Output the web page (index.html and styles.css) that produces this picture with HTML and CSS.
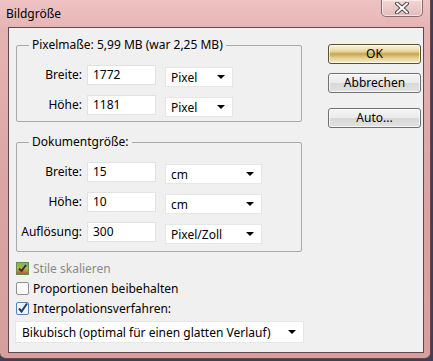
FILE: index.html
```html
<!DOCTYPE html>
<html lang="de">
<head>
    <meta charset="UTF-8">
    <title>Bildgröße</title>
    <link rel="stylesheet" href="styles.css">
</head>
<body>
    <div class="window">
        <div class="titlebar">
            <span class="title">Bildgröße</span>
            <div class="close-btn">
                <svg width="20" height="12" viewBox="0 0 20 12">
                    <path d="M5 1.5 L15 10.5 M15 1.5 L5 10.5" stroke="#4a4a4a" stroke-width="4" stroke-linecap="round"/>
                    <path d="M5 1.5 L15 10.5 M15 1.5 L5 10.5" stroke="#ffffff" stroke-width="2" stroke-linecap="round"/>
                </svg>
            </div>
        </div>
        <div class="client">
            <div class="main-col">
                <fieldset class="group group-pixel">
                    <legend>Pixelmaße: 5,99 MB (war 2,25 MB)</legend>
                    <div class="field-row">
                        <label>Breite:</label>
                        <div class="input">1772</div>
                        <div class="select small">Pixel<span class="arrow"></span></div>
                    </div>
                    <div class="field-row">
                        <label>Höhe:</label>
                        <div class="input">1181</div>
                        <div class="select small">Pixel<span class="arrow"></span></div>
                    </div>
                </fieldset>

                <fieldset class="group group-doc">
                    <legend>Dokumentgröße:</legend>
                    <div class="field-row">
                        <label>Breite:</label>
                        <div class="input">15</div>
                        <div class="select">cm<span class="arrow"></span></div>
                    </div>
                    <div class="field-row">
                        <label>Höhe:</label>
                        <div class="input">10</div>
                        <div class="select">cm<span class="arrow"></span></div>
                    </div>
                    <div class="field-row">
                        <label>Auflösung:</label>
                        <div class="input">300</div>
                        <div class="select">Pixel/Zoll<span class="arrow"></span></div>
                    </div>
                </fieldset>

                <div class="checks">
                    <div class="check-row disabled">
                        <svg class="box" width="13" height="13" viewBox="0 0 13 13">
                            <defs>
                                <linearGradient id="dis" x1="0" y1="0" x2="0" y2="1">
                                    <stop offset="0" stop-color="#6fb85a"/>
                                    <stop offset="0.5" stop-color="#b8b848"/>
                                    <stop offset="1" stop-color="#d0403a"/>
                                </linearGradient>
                            </defs>
                            <rect x="0.5" y="0.5" width="12" height="12" fill="url(#dis)" stroke="#6a8a50"/>
                            <path d="M3 6.5 L5.5 9 L10 3" fill="none" stroke="#3a2a3a" stroke-width="2"/>
                        </svg>
                        <span>Stile skalieren</span>
                    </div>
                    <div class="check-row">
                        <svg class="box" width="13" height="13" viewBox="0 0 13 13">
                            <rect x="0.5" y="0.5" width="12" height="12" rx="1.5" fill="#fafafa" stroke="#8e8f8f"/>
                        </svg>
                        <span>Proportionen beibehalten</span>
                    </div>
                    <div class="check-row">
                        <svg class="box" width="13" height="13" viewBox="0 0 13 13">
                            <rect x="0.5" y="0.5" width="12" height="12" rx="1.5" fill="#eef4fb" stroke="#5b7fb0"/>
                            <path d="M3 6.5 L5.5 9.5 L11 1.5" fill="none" stroke="#2a3d6a" stroke-width="2"/>
                        </svg>
                        <span>Interpolationsverfahren:</span>
                    </div>
                </div>

                <div class="select wide">Bikubisch (optimal für einen glatten Verlauf)<span class="arrow"></span></div>
            </div>

            <div class="button-col">
                <button class="btn btn-default">OK</button>
                <button class="btn">Abbrechen</button>
                <button class="btn btn-auto">Auto...</button>
            </div>
        </div>
    </div>
</body>
</html>
```

FILE: styles.css
```css
* {
    box-sizing: border-box;
    font-family: 'Noto Sans', 'Open Sans', sans-serif;
}

body {
    margin: 0;
    width: 433px;
    height: 361px;
    overflow: hidden;
    background: #3b3f5c;
}

.window {
    width: 431px;
    height: 359px;
    padding: 0 6px 6px 8px;
    background: linear-gradient(to bottom, #eec3c3 0px, #e6b3b3 30px, #dba3a3 200px, #d79e9e 361px);
    border: 1px solid #6b4848;
    border-top: none;
    border-left: none;
    border-radius: 0 0 6px 6px;
}

.titlebar {
    height: 27px;
    display: flex;
    justify-content: space-between;
    align-items: flex-start;
}

.title {
    font-size: 12px;
    line-height: 16px;
    margin: 6px 0 0 -2px;
    color: #000;
}

.close-btn {
    width: 42px;
    height: 17px;
    margin-right: 1px;
    border: 1px solid #8a6a6a;
    border-top: none;
    border-radius: 0 0 5px 5px;
    background: linear-gradient(to bottom, #f2d6d6, #e4bcbc);
    box-shadow: inset 0 0 0 1px rgba(255,255,255,0.55);
    display: flex;
    align-items: center;
    justify-content: center;
}

.client {
    height: 326px;
    background: #f0f0f0;
    border: 1px solid #5e4a4a;
    display: flex;
    padding: 0 0 0 7px;
}

.main-col {
    width: 297px;
    display: flex;
    flex-direction: column;
}

.group {
    margin: 9px 0 0 0;
    width: 286px;
    border: 1px solid #a9a9a9;
    border-radius: 2px;
    padding: 12px 0 6px 0;
    display: flex;
    flex-direction: column;
    gap: 10px;
}

.group legend {
    font-size: 12px;
    line-height: 16px;
    margin-left: 12px;
    padding: 0 3px;
    color: #000;
}

.group-doc {
    margin-top: 12px;
    padding-bottom: 9px;
}

.field-row {
    display: flex;
    align-items: flex-start;
    height: 20px;
}

.field-row label {
    width: 65px;
    text-align: right;
    font-size: 12px;
    line-height: 20px;
    color: #000;
}

.input {
    margin-left: 5px;
    width: 69px;
    height: 20px;
    background: #fff;
    border: 1px solid #e2e2e2;
    font-size: 12px;
    line-height: 18px;
    padding-left: 5px;
    color: #000;
}

.select {
    margin: 2px 0 0 9px;
    width: 97px;
    height: 20px;
    background: #fff;
    border: 1px solid #e6e6e6;
    font-size: 12px;
    line-height: 19px;
    padding-left: 5px;
    color: #000;
    display: flex;
    justify-content: space-between;
    align-items: center;
}

.select.small {
    width: 68px;
}

.arrow {
    width: 0;
    height: 0;
    margin-right: 7px;
    border-left: 4px solid transparent;
    border-right: 4px solid transparent;
    border-top: 4px solid #000;
}

.checks {
    margin-top: 6px;
    display: flex;
    flex-direction: column;
}

.check-row {
    height: 20px;
    display: flex;
    align-items: center;
    gap: 4px;
    font-size: 12px;
    color: #000;
}

.check-row .box {
    flex-shrink: 0;
}

.check-row.disabled span {
    color: #8a8a8a;
}

.select.wide {
    margin: 3px 0 0 -1px;
    width: 289px;
    height: 22px;
    padding-left: 6px;
}

.button-col {
    display: flex;
    flex-direction: column;
    padding: 16px 0 0 15px;
}

.btn {
    width: 93px;
    height: 20px;
    border: 1px solid #707070;
    border-radius: 3px;
    font-size: 12px;
    line-height: 16px;
    padding: 0;
    color: #000;
    background: linear-gradient(to bottom, #f4f4f4 0%, #ebebeb 48%, #d8d8d8 52%, #e2e2e2 100%);
    box-shadow: inset 0 0 0 1px rgba(255,255,255,0.7);
    margin-bottom: 9px;
}

.btn-default {
    border-color: #5a5030;
    background: linear-gradient(to bottom, #fbf6e4 0%, #e9d6a0 35%, #c9a54c 50%, #e4cd8e 70%, #f6eed2 100%);
}

.btn-auto {
    margin-top: 6px;
}
```
